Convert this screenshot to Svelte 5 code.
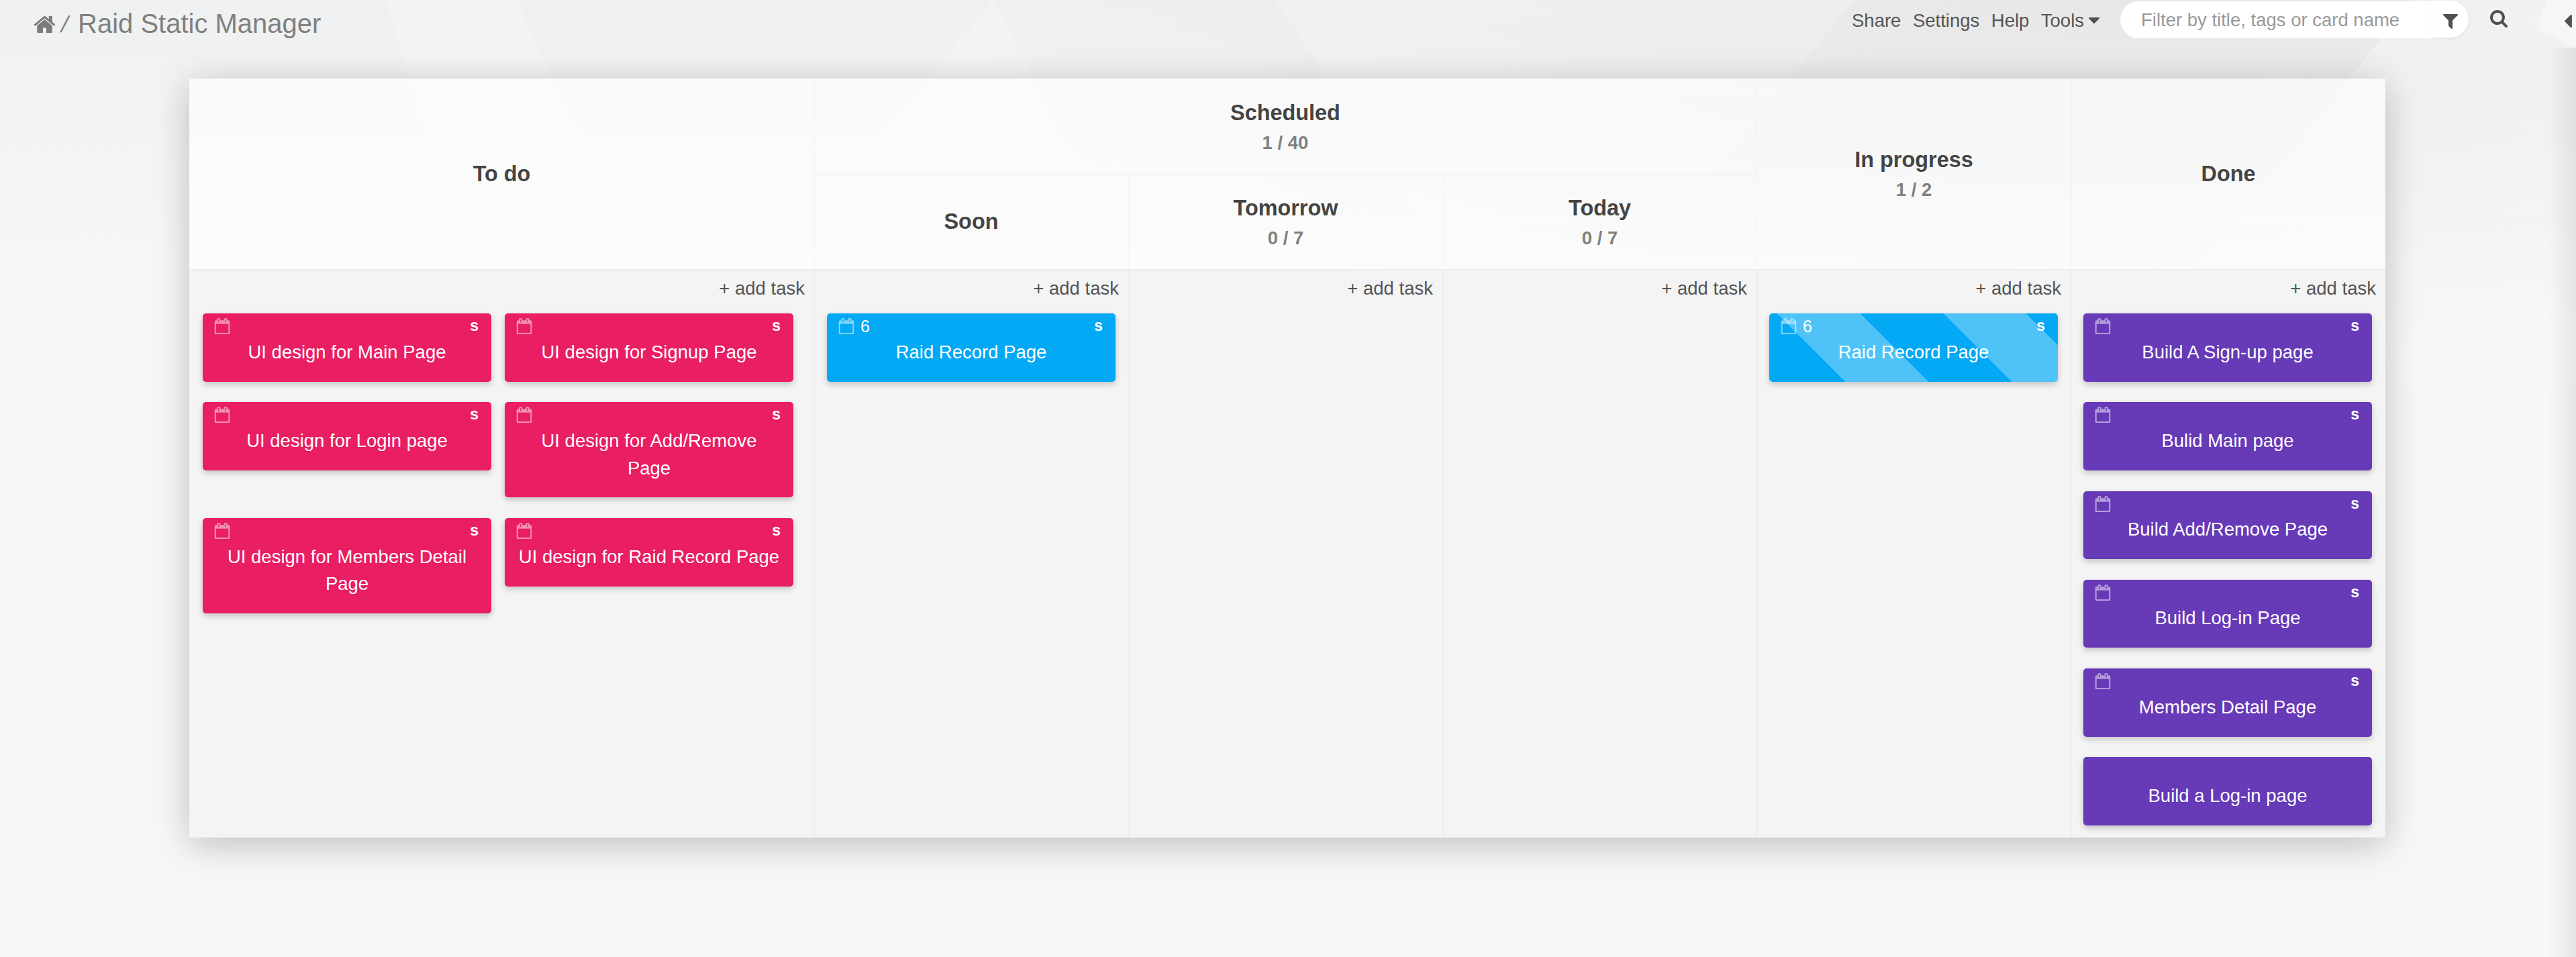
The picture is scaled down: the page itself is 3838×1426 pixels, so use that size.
<script>
  const todo = [
    { title: 'UI design for Main Page', size: 's' },
    { title: 'UI design for Signup Page', size: 's' },
    { title: 'UI design for Login page', size: 's' },
    { title: 'UI design for Add/Remove Page', size: 's' },
    { title: 'UI design for Members Detail Page', size: 's' },
    { title: 'UI design for Raid Record Page', size: 's' },
  ];
  const done = [
    { title: 'Build A Sign-up page', size: 's' },
    { title: 'Bulid Main page', size: 's' },
    { title: 'Build Add/Remove Page', size: 's' },
    { title: 'Build Log-in Page', size: 's' },
    { title: 'Members Detail Page', size: 's' },
    { title: 'Build a Log-in page' },
  ];
  const columns = [
    { name: 'todo', color: 'pink', cards: todo },
    { name: 'soon', color: 'blue', cards: [{ title: 'Raid Record Page', size: 's', days: 6 }] },
    { name: 'tomorrow', color: 'blue', cards: [] },
    { name: 'today', color: 'blue', cards: [] },
    { name: 'progress', color: 'striped', cards: [{ title: 'Raid Record Page', size: 's', days: 6 }] },
    { name: 'done', color: 'purple', cards: done },
  ];
  const scheduled = [
    { title: 'Soon' },
    { title: 'Tomorrow', limit: '0 / 7' },
    { title: 'Today', limit: '0 / 7' },
  ];
  const menu = ['Share', 'Settings', 'Help'];
</script>

{#snippet heading(title, limit)}
  <div class="heading">
    <div class="name">{title}</div>
    {#if limit}<div class="limit">{limit}</div>{/if}
  </div>
{/snippet}

<div class="page">
  <svg class="backdrop" viewBox="0 0 3838 1426" preserveAspectRatio="none" aria-hidden="true">
    <defs>
      <radialGradient id="shade" gradientUnits="userSpaceOnUse" cx="3150" cy="-60" r="1900" gradientTransform="scale(1 .3)">
        <stop offset="0" stop-color="#e7e7e7" />
        <stop offset=".45" stop-color="#e9e9e9" stop-opacity=".7" />
        <stop offset="1" stop-color="#eeefef" stop-opacity="0" />
      </radialGradient>
      <linearGradient id="facet" x1="0" y1="0" x2="0" y2="1">
        <stop offset="0" stop-color="#fff" stop-opacity=".2" />
        <stop offset="1" stop-color="#fff" stop-opacity="0" />
      </linearGradient>
      <linearGradient id="ridge" x1="0" y1="0" x2="0" y2="1">
        <stop offset="0" stop-color="#fff" stop-opacity=".35" />
        <stop offset="1" stop-color="#fff" stop-opacity="0" />
      </linearGradient>
      <linearGradient id="edge" x1="0" y1="0" x2="1" y2="0">
        <stop offset="0" stop-color="#000" stop-opacity="0" />
        <stop offset="1" stop-color="#000" stop-opacity=".07" />
      </linearGradient>
      <linearGradient id="topshade" x1="0" y1="0" x2="0" y2="1">
        <stop offset="0" stop-color="#e8e9ea" stop-opacity=".5" />
        <stop offset="1" stop-color="#e8e9ea" stop-opacity="0" />
      </linearGradient>
    </defs>
    <rect width="3838" height="1426" fill="#f6f7f7" />
    <polygon points="0,0 3838,0 3838,420 0,420" fill="url(#topshade)" />
    <rect width="3838" height="1426" fill="url(#shade)" />
    <polygon points="575,0 770,0 960,420 700,420" fill="url(#facet)" />
    <polygon points="1480,0 1700,420 1130,420" fill="url(#facet)" />
    <polygon points="1900,0 2763,0 2420,420 2180,420" fill="url(#facet)" />
    <polygon points="3594,0 3838,0 3838,700 3032,700" fill="url(#ridge)" />
    <polygon points="3795,0 3838,0 3838,71 3779,43" fill="#f6f6f6" />
    <rect x="3796" y="71" width="42" height="1355" fill="url(#edge)" />
  </svg>

  <header class="bar">
    <div class="crumbs">
      <svg class="home" viewBox="0 0 1792 1792"><path d="M1472 992v480q0 26-19 45t-45 19h-384v-384h-256v384h-384q-26 0-45-19t-19-45v-480q0-1 .5-3t.5-3l575-474 575 474q1 2 1 6zm223-69l-62 74q-8 9-21 11h-3q-13 0-21-7l-692-577-692 577q-12 8-24 7-13-2-21-11l-62-74q-8-10-7-23.5t11-21.5l719-599q32-26 76-26t76 26l244 204v-195q0-14 9-23t23-9h192q14 0 23 9t9 23v408l219 182q10 8 11 21.5t-7 23.5z" /></svg>
      <span class="slash">/</span>
      <span class="board-name">Raid Static Manager</span>
    </div>
    <nav class="menu">
      {#each menu as item}<span>{item}</span>{/each}
      <span class="tools">Tools<svg viewBox="0 0 1792 1792"><path d="M1408 704q0 26-19 45l-448 448q-19 19-45 19t-45-19l-448-448q-19-19-19-45t19-45 45-19h896q26 0 45 19t19 45z" /></svg></span>
    </nav>
    <div class="filter">
      <div class="field">Filter by title, tags or card name</div>
      <div class="funnel">
        <svg viewBox="0 0 1792 1792"><path d="M1595 295q17 41-14 70l-493 493v742q0 42-39 59-13 5-25 5-27 0-45-19l-256-256q-19-19-19-45v-486l-493-493q-31-29-14-70 17-39 59-39h1280q42 0 59 39z" /></svg>
      </div>
    </div>
    <svg class="search" viewBox="0 0 1792 1792"><path d="M1216 832q0-185-131.5-316.5t-316.5-131.5-316.5 131.5-131.5 316.5 131.5 316.5 316.5 131.5 316.5-131.5 131.5-316.5zm512 832q0 52-38 90t-90 38q-54 0-90-38l-343-342q-179 124-399 124-143 0-273.5-55.5t-225-150-150-225-55.5-273.5 55.5-273.5 150-225 225-150 273.5-55.5 273.5 55.5 225 150 150 225 55.5 273.5q0 220-124 399l343 343q37 37 37 90z" /></svg>
    <svg class="collapse" viewBox="640 384 576 1024"><path d="M1216 448v896q0 26-19 45t-45 19-45-19l-448-448q-19-19-19-45t19-45l448-448q19-19 45-19t45 19 19 45z" /></svg>
  </header>

  <main class="board">
    <div class="heads">
      <div class="head">{@render heading('To do')}</div>
      <div class="group">
        <div class="head parent">{@render heading('Scheduled', '1 / 40')}</div>
        <div class="children">
          {#each scheduled as child}
            <div class="head">{@render heading(child.title, child.limit)}</div>
          {/each}
        </div>
      </div>
      <div class="head">{@render heading('In progress', '1 / 2')}</div>
      <div class="head">{@render heading('Done')}</div>
    </div>

    <div class="lanes">
      {#each columns as column (column.name)}
        <section class="lane {column.name}">
          <div class="add">+ add task</div>
          <div class="cards">
            {#each column.cards as card}
              <article class="card {column.color}">
                {#if card.size}
                  <div class="meta">
                    <svg viewBox="0 0 1792 1792"><path d="M192 1664h1408v-1024h-1408v1024zm384-1216v-288q0-14-9-23t-23-9h-64q-14 0-23 9t-9 23v288q0 14 9 23t23 9h64q14 0 23-9t9-23zm768 0v-288q0-14-9-23t-23-9h-64q-14 0-23 9t-9 23v288q0 14 9 23t23 9h64q14 0 23-9t9-23zm384-64v1280q0 52-38 90t-90 38h-1408q-52 0-90-38t-38-90v-1280q0-52 38-90t90-38h128v-96q0-66 47-113t113-47h64q66 0 113 47t47 113v96h384v-96q0-66 47-113t113-47h64q66 0 113 47t47 113v96h128q52 0 90 38t38 90z" /></svg>
                    {#if card.days}<span class="days">{card.days}</span>{/if}
                    <span class="size">{card.size}</span>
                  </div>
                {/if}
                <div class="title">{card.title}</div>
              </article>
            {/each}
          </div>
        </section>
      {/each}
    </div>
  </main>
</div>

<style>
  :global(body) {
    margin: 0;
    overflow: hidden;
  }
  .page {
    position: relative;
    width: 3838px;
    height: 1426px;
    overflow: hidden;
    box-sizing: border-box;
    font-family: 'Liberation Sans', Arial, sans-serif;
    font-size: 27.5px;
    color: #555;
    background: #f6f7f7;
  }
  .backdrop {
    position: absolute;
    inset: 0;
    width: 100%;
    height: 100%;
  }
  .bar {
    position: relative;
    display: flex;
    align-items: flex-start;
    height: 117px;
    padding-left: 49px;
    line-height: 40px;
  }
  .bar svg {
    fill: #505050;
    display: block;
    flex: none;
  }
  .crumbs {
    display: flex;
    color: #808080;
    width: 2709px;
    white-space: nowrap;
  }
  .crumbs .home {
    width: 35px;
    height: 35px;
    margin-top: 19px;
    fill: #7b7b7b;
  }
  .slash {
    width: 11px;
    margin-left: 9.5px;
    padding-top: 16px;
    font-size: 34px;
    transform: skewX(-14deg);
  }
  .board-name {
    margin-left: 11.5px;
    padding-top: 15px;
    font-size: 40px;
  }
  .menu {
    display: flex;
    gap: 17.5px;
    width: 400px;
    padding: 11px 0 0 1px;
  }
  .tools {
    display: flex;
  }
  .tools svg {
    width: 28px;
    height: 28px;
    margin: 5px 0 0 1px;
  }
  .filter {
    display: flex;
    width: 519px;
    height: 57px;
    flex: none;
  }
  .field {
    width: 433px;
    height: 55px;
    margin-top: 2px;
    padding-left: 31px;
    line-height: 56px;
    color: #999;
    background: #fff;
    border-right: 1px solid #f6f6f6;
    border-radius: 28px 0 0 28px;
    white-space: nowrap;
  }
  .funnel {
    width: 54px;
    height: 55px;
    margin-top: 1px;
    background: #fff;
    border-radius: 0 28px 28px 0;
    box-shadow: 1px 2px 4px rgba(0, 0, 0, 0.06);
  }
  .funnel svg {
    width: 28px;
    height: 28px;
    margin: 16px 0 0 13px;
  }
  .search {
    width: 28px;
    height: 28px;
    margin: 13px 0 0 31px;
  }
  .collapse {
    width: 11px;
    height: 19px;
    margin: 22px 0 0 84px;
  }

  .board {
    position: relative;
    width: 3272px;
    height: 1131px;
    margin-left: 282px;
    display: flex;
    flex-direction: column;
    box-shadow: 0 10px 50px rgba(0, 0, 0, 0.23);
  }
  .heads {
    display: grid;
    grid-template-columns: 930px 1405px 468px 469px;
    height: 284px;
    background: rgba(255, 255, 255, 0.6);
    border-bottom: 2px solid #ebecec;
  }
  .head {
    display: flex;
    align-items: center;
    justify-content: center;
    text-align: center;
    box-sizing: border-box;
    padding: 1px 0 0 1px;
  }
  .heads > .group + .head,
  .heads > .head:last-child,
  .children .head + .head {
    box-shadow: inset 2px 0 0 rgba(0, 0, 0, 0.015);
  }
  .group {
    display: grid;
    grid-template-rows: 143px 141px;
    box-shadow: inset 2px 0 0 rgba(0, 0, 0, 0.015);
  }
  .children {
    display: grid;
    grid-template-columns: 469px 468px 468px;
    box-shadow: inset 0 2px 0 rgba(0, 0, 0, 0.015);
  }
  .name {
    font-size: 32.4px;
    line-height: 47.8px;
    font-weight: bold;
    color: #444;
  }
  .limit {
    font-size: 27.5px;
    line-height: 40.6px;
    font-weight: bold;
    color: #808080;
  }

  .lanes {
    display: grid;
    grid-template-columns: 930px 469px repeat(3, 468px) 469px;
    flex: 1;
    background: rgba(243, 243, 243, 0.85);
  }
  .lane {
    box-sizing: border-box;
    padding-left: 17px;
    border-left: 2px solid #ededed;
  }
  .lane.todo {
    padding-left: 20px;
    border-left: 0;
  }
  .lane.soon {
    padding-left: 18px;
  }
  .add {
    height: 57px;
    padding: 7px 14px 0 0;
    line-height: 40.6px;
    text-align: right;
  }
  .todo .add {
    padding-right: 13px;
  }
  .cards {
    display: grid;
    grid-template-columns: 430px;
    gap: 30.7px 20px;
    align-items: start;
  }
  .todo .cards {
    grid-template-columns: 430px 430px;
  }
  .card {
    position: relative;
    box-sizing: border-box;
    padding: 37.7px 19.5px 23.3px;
    border-radius: 5px;
    color: #fff;
    box-shadow: 0 4px 10px rgba(0, 0, 0, 0.2);
  }
  .pink {
    background: #e91e63;
  }
  .blue {
    background: #03a9f4;
  }
  .purple {
    background: #673ab7;
  }
  .striped {
    background: repeating-linear-gradient(45deg, #03a9f4 0 80.3px, #4fc3f7 80.3px 167.8px, #03a9f4 167.8px 175px);
  }
  .meta {
    position: absolute;
    inset: 7px 19px auto 17px;
    display: flex;
    align-items: flex-start;
    height: 24px;
    line-height: 25px;
  }
  .meta svg {
    width: 24px;
    height: 24px;
    fill: rgba(255, 255, 255, 0.5);
    stroke: rgba(255, 255, 255, 0.25);
    stroke-width: 40px;
  }
  .days {
    margin-left: 9px;
    font-size: 25px;
  }
  .size {
    margin-left: auto;
    font-size: 23px;
    font-weight: bold;
    line-height: 23px;
  }
  .title {
    text-align: center;
    line-height: 40.6px;
  }
</style>
